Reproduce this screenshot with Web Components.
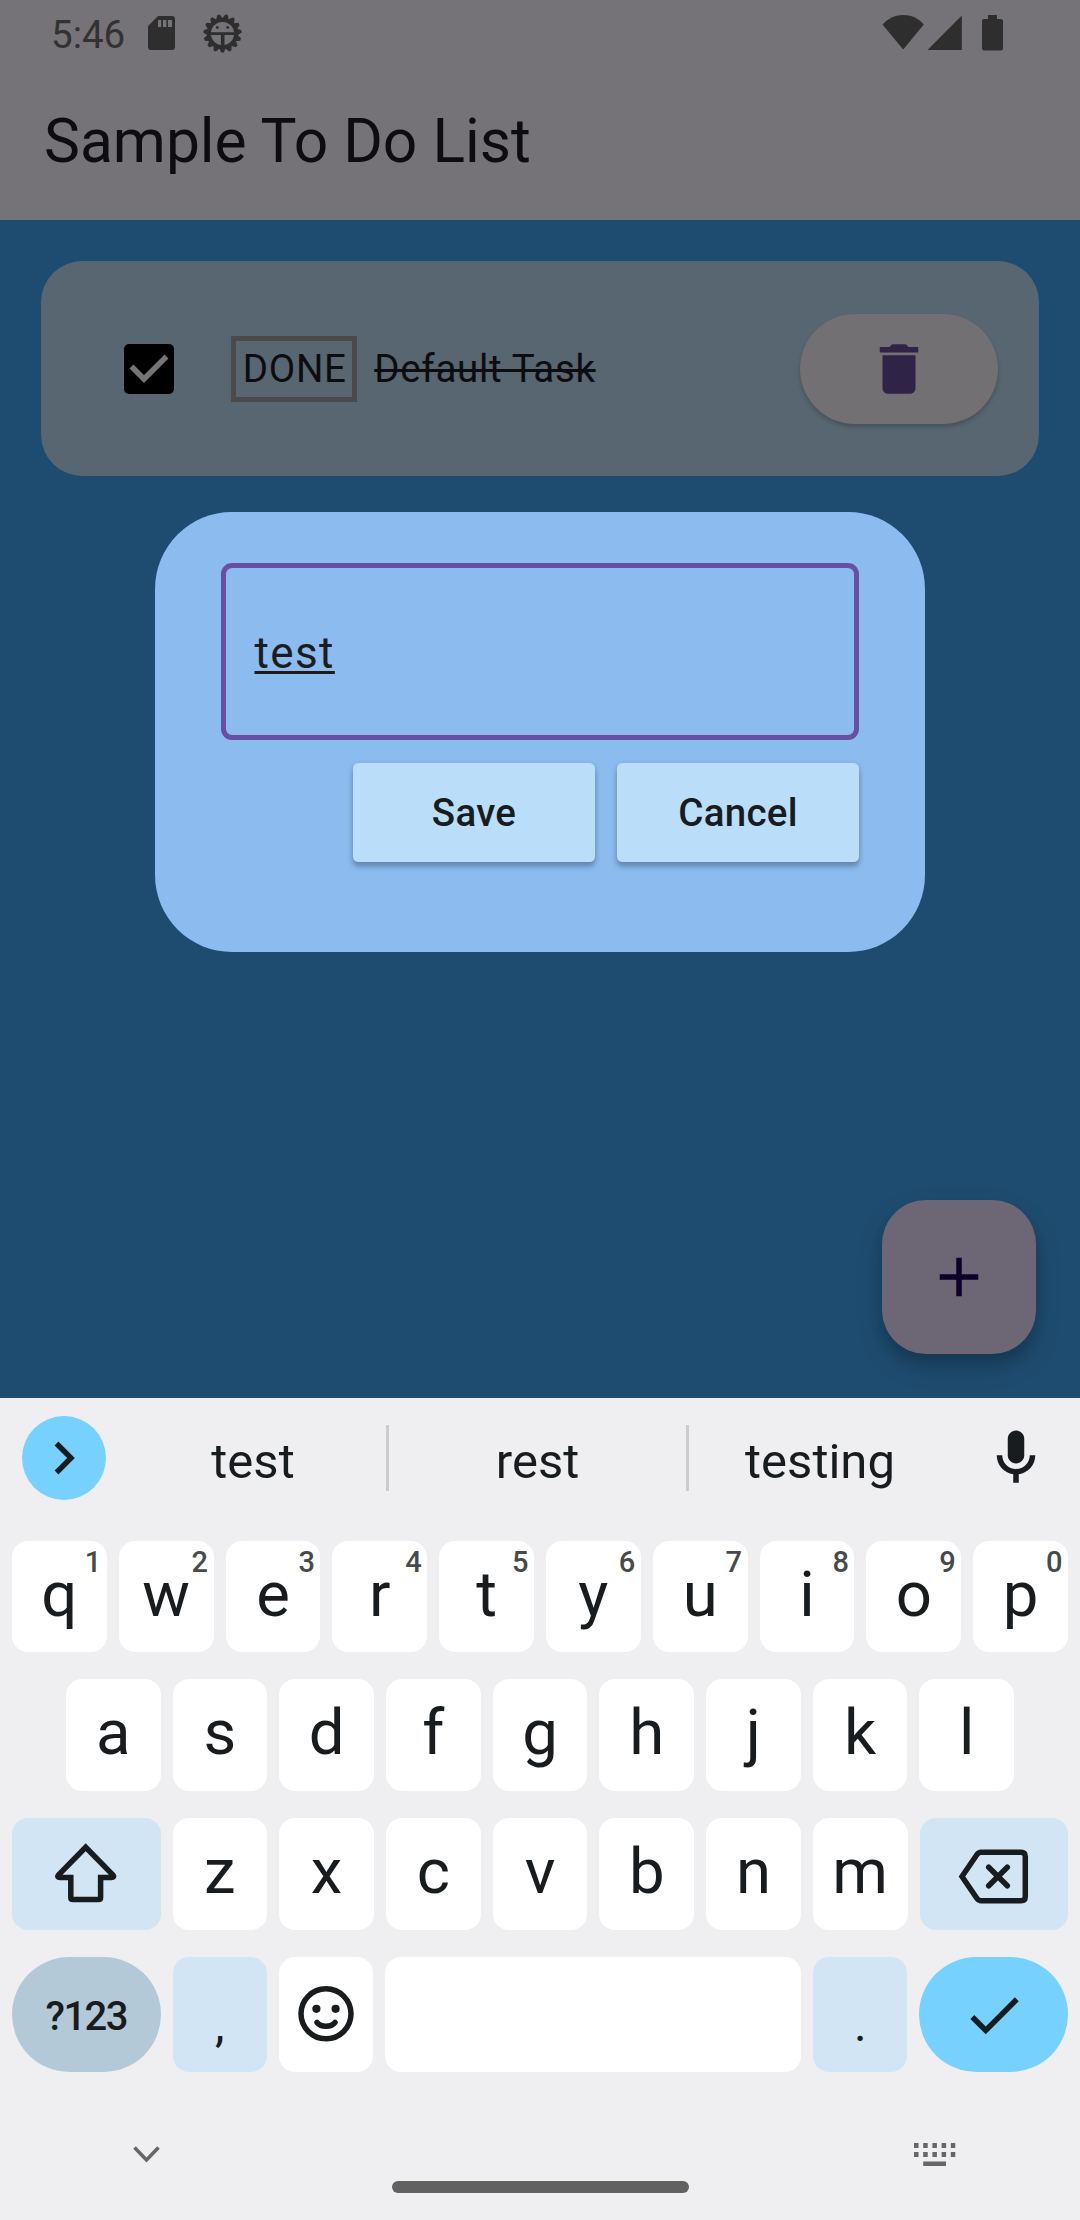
<!DOCTYPE html>
<html lang="en">
<head>
<meta charset="utf-8">
<title>Sample To Do List</title>
<style>
html,body{margin:0;padding:0}
body{width:1080px;height:2220px;overflow:hidden;font-family:Roboto,sans-serif;background:#efeff1}
</style>
</head>
<body>
<todo-screen></todo-screen>
<script>
const define = (name, html) => {
  const t = document.createElement('template');
  t.innerHTML = html;
  customElements.define(name, class extends HTMLElement {
    constructor() {
      super();
      this.attachShadow({ mode: 'open' }).append(t.content.cloneNode(true));
    }
  });
};

define('status-bar', `
<style>
:host{display:flex;box-sizing:border-box;height:66px;padding:0 77px 0 51px;align-items:flex-start;color:#323232;fill:#2e2e2e}
.time{font-size:38.5px;line-height:45px;margin-top:12px;width:97px;white-space:nowrap}
svg{display:block;flex:none}
.sd{margin:16px 28px 0 0}
.bug{margin-top:14px}
.right{display:flex;margin-left:auto;margin-top:15px}
</style>
<span class="time">5:46</span>
<svg class="sd" width="27" height="35" viewBox="0 0 27 35"><path fill-rule="evenodd" d="M10 0H24a3 3 0 0 1 3 3V31a3 3 0 0 1-3 3H3a3 3 0 0 1-3-3V10ZM10 4v7h3.2V4Zm5 0v7h3.4V4Zm5 0v7h4V4Z"/></svg>
<svg class="bug" width="39" height="39" viewBox="-19.5 -19.5 39 39">
<g id="teeth"></g>
<circle r="13.6" fill="none" stroke="#2e2e2e" stroke-width="4"/>
<path d="M-13-1.3H13V1.5H2V13H-1.6V1.5H-13Z"/><circle cx="-5.2" cy="-6" r="1.4"/><circle cx="5.2" cy="-6" r="1.4"/></svg>
<div class="right">
<svg width="42" height="36" viewBox="0 0 42 36"><path d="M.5 9.500C6.500 3 13.500 0 21.200 0S36.500 3 41.800 9.500L21.200 34.500Z"/></svg>
<svg width="36" height="36" viewBox="0 0 36 36" style="margin-left:3px"><path d="M0.500 35H34.800V.5Z"/></svg>
<svg width="21" height="36" viewBox="0 0 21 36" style="margin-left:19px"><path d="M6 0H15V4H19a2 2 0 0 1 2 2V33.500a2.200 2.200 0 0 1-2 2H2a2.200 2.200 0 0 1-2-2V6A2 2 0 0 1 2 4H6Z"/></svg>
</div>`);

define('app-bar', `
<style>
:host{display:block;height:220px;background:#757377}
h1{margin:0;height:151px;padding-left:44px;display:flex;align-items:center;font-size:60.5px;font-weight:400;color:#0d0d0f;white-space:nowrap}
</style>
<status-bar></status-bar>
<h1><slot></slot></h1>`);

define('task-card', `
<style>
:host{display:flex;align-items:center;box-sizing:border-box;margin:41px 41.250px 0;height:215px;border-radius:41.250px;background:#576671;padding:0 41.250px 0 82.500px;color:#0d0d0f;font-size:38.500px;letter-spacing:.69px}
svg{display:block}
.tag{box-sizing:border-box;width:126px;height:66px;margin-left:57.500px;border:5.500px solid #4a4a4a;display:flex;align-items:center;justify-content:center;padding-left:1px}
.name{margin-left:17px;text-decoration:line-through;text-decoration-thickness:2.500px;white-space:nowrap}
button{all:unset;box-sizing:border-box;width:198px;height:110px;border-radius:55px;margin-left:auto;background:#737074;display:flex;align-items:center;justify-content:center;fill:#2f2348;box-shadow:0 3px 4px rgba(0,0,0,.2)}
</style>
<svg width="50" height="50" viewBox="0 0 18 18"><rect width="18" height="18" rx="1.800"/><path d="M2.700 8.100 7.200 12.600 15.300 4.500" fill="none" stroke="#757575" stroke-width="2"/></svg>
<span class="tag">DONE</span>
<span class="name"><slot></slot></span>
<button aria-label="Delete"><svg width="66" height="66" viewBox="0 0 24 24"><path d="M6 19c0 1.100.9 2 2 2h8c1.100 0 2-.9 2-2V7H6v12zM19 4h-3.500l-1-1h-5l-1 1H5v2h14V4z"/></svg></button>`);

define('dialog-button', `
<style>
:host{display:flex;align-items:center;justify-content:center;width:242px;height:99px;border-radius:5.500px;background:#badefa;color:#191c1e;font-size:38.500px;font-weight:500;letter-spacing:.27px;box-shadow:0 5px 5px rgba(60,80,110,.4),0 1px 5px rgba(60,80,110,.22)}
</style><slot></slot>`);

define('edit-dialog', `
<style>
:host{box-sizing:border-box;width:770px;height:440px;border-radius:77px;background:#8bbbef;padding:51px 66px 0;display:flex;flex-direction:column}
.field{box-sizing:border-box;height:176.500px;border:5.500px solid #6750a4;border-radius:11px;display:flex;align-items:center;padding:3px 0 0 28.500px;font-size:44px;letter-spacing:1.375px;color:#1c1b1f}
.field span{text-decoration:underline;text-decoration-thickness:2.500px;text-underline-offset:3px;text-decoration-skip-ink:none}
.actions{display:flex;justify-content:flex-end;gap:22px;margin-top:23.500px}
</style>
<div class="field"><span><slot></slot></span></div>
<div class="actions"><dialog-button>Save</dialog-button><dialog-button>Cancel</dialog-button></div>`);

define('add-button', `
<style>
:host{width:154px;height:154px;border-radius:44px;background:#6d6775;display:flex;align-items:center;justify-content:center;box-shadow:0 12px 26px rgba(0,0,0,.2),0 8px 12px rgba(0,0,0,.1)}
svg{display:block}
</style>
<svg width="66" height="66" viewBox="0 0 24 24" fill="#0e0029"><path d="M19 13h-6v6h-2v-6H5v-2h6V5h2v6h6v2z"/></svg>`);

define('suggestion-strip', `
<style>
:host{display:flex;align-items:center;height:84px;padding:18px 31px 0 22px;color:#191c1e;font-size:49px}
.more{width:84px;height:84px;border-radius:42px;background:#77d1ff;display:flex;align-items:center;justify-content:center;margin-right:14px}
.w{height:84px;display:flex;align-items:center;justify-content:center;padding-top:7px;box-sizing:border-box}
i{width:3px;height:66px;background:#cbcccd}
svg{display:block}
</style>
<div class="more"><svg width="84" height="84" viewBox="0 0 84 84"><path d="M34.500 27.500 49 42 34.500 56.500" fill="none" stroke="#191c1e" stroke-width="5.400"/></svg></div>
<div class="w" style="width:266px"><slot name="a"></slot></div><i></i>
<div class="w" style="width:297px"><slot name="b"></slot></div><i></i>
<div class="w" style="width:262px"><slot name="c"></slot></div>
<svg width="66" height="66" viewBox="0 0 24 24" fill="#191c1e" style="margin-left:32px"><path d="M12 14c1.660 0 3-1.340 3-3V5c0-1.660-1.340-3-3-3S9 3.340 9 5v6c0 1.660 1.340 3 3 3z"/><path d="M17 11c0 2.760-2.240 5-5 5s-5-2.240-5-5H5c0 3.530 2.610 6.430 6 6.920V21h2v-3.080c3.390-.49 6-3.390 6-6.920h-2z"/></svg>`);

define('key-cap', `
<style>
:host{position:relative;flex:1 1 0;min-width:0;display:flex;align-items:center;justify-content:center;box-sizing:border-box;padding-bottom:4px;border-radius:16px;background:#fff;color:#191c1e;font-size:63.500px;line-height:72px}
:host([tone=soft]){background:#d2e5f4}
:host([tone=mode]){background:#b4c9d7;border-radius:58px;font-size:40px;letter-spacing:-1.500px;font-weight:500;padding-bottom:0;padding-top:5px}
:host([tone=go]){background:#77d1ff;border-radius:58px}
:host([wide]){flex:none;width:148.500px}
:host([space]){flex:none;width:416px}
:host([punct]){font-size:48px;padding:21px 0 0}
:host([icon]){padding:0}
::slotted(sup){position:absolute;right:5.500px;top:4px;font-size:29px;line-height:34px;color:#474a4c;font-weight:500}
::slotted(svg){display:block}
</style><slot></slot><slot name="hint"></slot>`);

define('key-row', `
<style>:host{display:flex;gap:12px;height:112px;padding:0 12px;margin-top:27px}
:host([first]){height:111px;margin-top:41px}
:host([inset]){padding:0 66px}
:host([last]){height:115px}</style><slot></slot>`);

define('nav-bar', `
<style>
:host{display:flex;flex-direction:column;align-items:center;margin-top:71px}
.row{box-sizing:border-box;width:1080px;display:flex;justify-content:space-between;align-items:flex-start;padding:0 124px 0 133px;height:38px}
svg{display:block}
.pill{width:297px;height:12px;border-radius:6px;background:#616161}
</style>
<div class="row">
<svg width="27" height="20" viewBox="0 0 27 20" style="margin-top:2px"><path d="M1.500 2.600 13.500 14.900 25.500 2.600" fill="none" stroke="#666" stroke-width="3.600"/></svg>
<svg width="42" height="24" viewBox="0 0 42 24"><path fill="#666" d="M0 0h4.500v5H0Zm9.200 0h4.500v5H9.200Zm9.200 0h4.500v5h-4.500Zm9.200 0h4.500v5h-4.500Zm9.200 0h4.500v5h-4.500ZM0 9h4.500v5H0Zm9.200 0h4.500v5H9.200Zm9.200 0h4.500v5h-4.500Zm9.200 0h4.500v5h-4.500Zm9.200 0h4.500v5h-4.500ZM9.200 18.500h22.800v4.500H9.200Z"/></svg>
</div>
<div class="pill"></div>`);

const letters = (s, hints = '') => [...s].map((c, i) =>
  `<key-cap>${c}${hints ? `<sup slot="hint">${hints[i]}</sup>` : ''}</key-cap>`).join('');
const line = 'fill="none" stroke="#191c1e" stroke-width="5.500"';

define('soft-keyboard', `
<style>:host{display:block;height:822px;background:#efeff1}</style>
<suggestion-strip><span slot="a">test</span><span slot="b">rest</span><span slot="c">testing</span></suggestion-strip>
<key-row first>${letters('qwertyuiop', '1234567890')}</key-row>
<key-row inset>${letters('asdfghjkl')}</key-row>
<key-row>
<key-cap wide icon tone="soft"><svg width="148" height="112" viewBox="0 0 148 112"><path ${line} d="M73.700 29.200 46.600 56.800C45 58.600 46 59.600 48 59.600H58.800V79.500Q58.800 81.600 61 81.600H86.400Q88.600 81.600 88.600 79.500V59.600H99.400C101.400 59.600 102.400 58.600 100.800 56.800Z"/></svg></key-cap>
${letters('zxcvbnm')}
<key-cap wide icon tone="soft"><svg width="148" height="112" viewBox="0 0 148 112"><path ${line} d="M42 58.500 57 36.500Q58.600 34.200 61 34.200H101Q105.300 34.200 105.300 38.500V78.500Q105.300 82.800 101 82.800H61Q58.600 82.800 57 80.500Z"/><path ${line} stroke-linecap="round" d="M68.700 49.200 87.300 67.800M87.300 49.200 68.700 67.800"/></svg></key-cap>
</key-row>
<key-row last>
<key-cap wide tone="mode">?123</key-cap>
<key-cap punct tone="soft">,</key-cap>
<key-cap icon><svg width="94" height="115" viewBox="0 0 94 115"><circle cx="47" cy="56.800" r="25" ${line}/><circle cx="37.400" cy="51.800" r="4.100" fill="#191c1e"/><circle cx="56.600" cy="51.800" r="4.100" fill="#191c1e"/><path ${line} stroke-linecap="round" d="M38 65.500Q41 69.300 47 69.300T56 65.500"/></svg></key-cap>
<key-cap space></key-cap>
<key-cap punct tone="soft">.</key-cap>
<key-cap wide icon tone="go"><svg width="66" height="66" viewBox="0 0 24 24" fill="#191c1e"><path d="M9 16.170 4.830 12l-1.420 1.410L9 19 21 7l-1.410-1.410z"/></svg></key-cap>
</key-row>
<nav-bar></nav-bar>`);

define('todo-screen', `
<style>
:host{display:block;width:1080px;height:2220px}
main{position:relative;height:1398px;background:#1e4c70;overflow:hidden}
edit-dialog{position:absolute;left:155px;top:512px}
add-button{position:absolute;right:44px;bottom:44px}
</style>
<main>
<app-bar>Sample To Do List</app-bar>
<task-card>Default Task</task-card>
<add-button></add-button>
<edit-dialog>test</edit-dialog>
</main>
<soft-keyboard></soft-keyboard>`);

/* gear teeth round the debug glyph */
const bar = document.querySelector('todo-screen').shadowRoot.querySelector('app-bar').shadowRoot.querySelector('status-bar').shadowRoot;
const ns = 'http://www.w3.org/2000/svg';
for (let i = 0; i < 15; i++) {
  const p = document.createElementNS(ns, 'path');
  p.setAttribute('d', 'M-3.400 14.500 -1.300 19.100H1.300L3.400 14.500Z');
  p.setAttribute('transform', `rotate(${i * 24})`);
  bar.getElementById('teeth').append(p);
}
</script>
</body>
</html>
